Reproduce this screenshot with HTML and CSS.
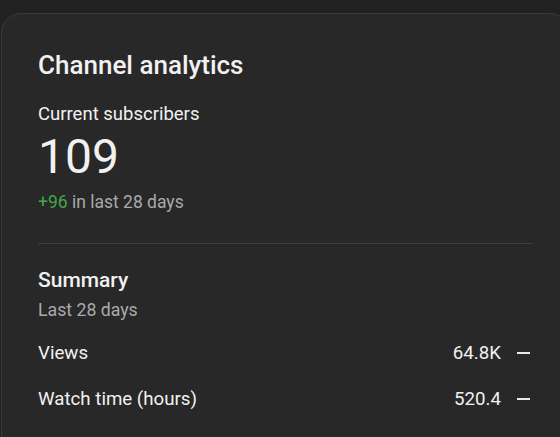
FILE: index.html
```html
<!DOCTYPE html>
<html lang="en">
<head>
<meta charset="utf-8">
<title>Channel analytics</title>
<link rel="stylesheet" href="styles.css">
</head>
<body>
  <section class="card">
    <h1 class="title">Channel analytics</h1>
    <div class="subs-label">Current subscribers</div>
    <div class="subs-count">109</div>
    <div class="subs-change"><span class="pos">+96</span> in last 28 days</div>
    <hr class="divider">
    <h2 class="summary">Summary</h2>
    <div class="period">Last 28 days</div>
    <div class="rows">
      <div class="row">
        <span class="metric">Views</span>
        <span class="value">64.8K</span>
        <span class="trend"><span class="dash"></span></span>
      </div>
      <div class="row">
        <span class="metric">Watch time (hours)</span>
        <span class="value">520.4</span>
        <span class="trend"><span class="dash"></span></span>
      </div>
    </div>
  </section>
</body>
</html>
```

FILE: styles.css
```css
html, body {
  margin: 0;
  padding: 0;
  background: #212121;
  height: 100%;
  overflow: hidden;
}
body {
  font-family: Roboto, "Noto Sans", Arial, sans-serif;
  color: #f1f1f1;
}
.card {
  margin: 13px 0 0 1px;
  width: 495px;
  height: 460px;
  padding: 35px 36px 0 36px;
  background: #282828;
  border: 1px solid #3a3a3a;
  border-radius: 20px;
}
.title {
  margin: 0;
  font-size: 26px;
  line-height: 32px;
  font-weight: 500;
}
.subs-label {
  margin-top: 21px;
  font-size: 18.5px;
  line-height: 24px;
}
.subs-count {
  margin-top: 3px;
  font-size: 48px;
  line-height: 56px;
  font-weight: 400;
}
.subs-change {
  margin-top: 5px;
  font-size: 17.5px;
  line-height: 24px;
  color: #aaaaaa;
}
.pos {
  color: #41a84a;
}
.divider {
  margin: 29px 0 0 0;
  border: 0;
  height: 1px;
  background: #3d3d3d;
}
.summary {
  margin: 22px 0 0 0;
  font-size: 21px;
  line-height: 28px;
  font-weight: 500;
}
.period {
  margin-top: 4px;
  font-size: 17.7px;
  line-height: 24px;
  color: #aaaaaa;
}
.rows {
  margin-top: 19px;
  display: flex;
  flex-direction: column;
  gap: 22px;
}
.row {
  display: flex;
  align-items: center;
  font-size: 18.7px;
  line-height: 24px;
}
.metric {
  flex: 1;
}
.value {
  margin-right: 16px;
}
.trend {
  width: 16px;
  height: 24px;
  display: flex;
  align-items: center;
  justify-content: flex-start;
}
.dash {
  width: 13px;
  height: 2px;
  background: #e8e8e8;
}
```
